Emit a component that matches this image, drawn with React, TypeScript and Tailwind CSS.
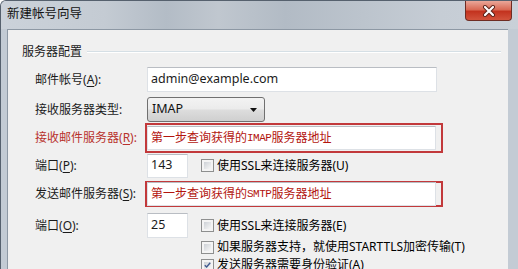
import React from 'react';

const inputCls =
    'h-[24px] bg-white border border-[#dde1e6] border-t-[#b9bdc3] px-[3px] flex items-center text-[12.5px] text-[#1b1b1b]';

const Check: React.FC<{ checked?: boolean }> = ({ checked }) => (
    <div className="w-[13px] h-[13px] shrink-0 border border-[#8e8f8f] bg-[#f4f4f4] p-[2px]">
        <div className="w-full h-full bg-[linear-gradient(135deg,#cdd1d6,#f7f7f7)] flex items-center justify-center">
            {checked && (
                <svg width="9" height="8" viewBox="0 0 9 8">
                    <path d="M1 4.2 L3.4 6.6 L8 1.2" stroke="#3f5a8f" strokeWidth="1.8" fill="none" />
                </svg>
            )}
        </div>
    </div>
);

const Label: React.FC<{ text: string; acc?: string; red?: boolean; w?: string }> = ({ text, acc, red, w }) => (
    <div className={`${w ?? 'w-[112px]'} shrink-0 ${red ? 'text-[#b8322d]' : 'text-[#1b1b1b]'}`}>
        {text}
        {acc && (
            <>
                (<span className="underline underline-offset-2">{acc}</span>)
            </>
        )}
        :
    </div>
);

const RedHint: React.FC<{ proto: string }> = ({ proto }) => (
    <div className="w-[298px] h-full border-2 border-[#c2393b] flex items-center">
        <div className={`${inputCls} w-[289px] text-[12px] text-[#b3150f]`}>
            第一步查询获得的
            <span className="font-['Liberation_Mono',monospace] text-[11px] tracking-[-0.5px]">{proto}</span>
            服务器地址
        </div>
    </div>
);

export default function App() {
    return (
        <div className="w-[518px] h-[269px] overflow-hidden flex flex-col border-l border-t border-[#56616e] rounded-tl-[6px] bg-[#c3cbd4] font-['Noto_Sans','Noto_Sans_CJK_SC',sans-serif] text-[12px] leading-none">
            {/* title bar */}
            <div className="h-[28px] shrink-0 flex items-start justify-between pl-[6px] bg-[linear-gradient(90deg,#cbd2da_0%,#c4cbd3_20%,#b3bcc6_32%,#c0c7cf_42%,#b2bbc5_55%,#bcc4cd_70%,#c6cdd5_85%,#c9d0d8_100%)]">
                <span className="mt-[7px] text-[12.5px] text-[#111]">新建帐号向导</span>
                <div className="mr-[6px] w-[47px] h-[20px] rounded-b-[4px] border border-t-0 border-[#6e2c23] bg-[linear-gradient(180deg,#eaa799_0%,#d96a55_45%,#c3331f_55%,#d2533c_100%)] flex items-center justify-center">
                    <svg width="14" height="12" viewBox="0 0 14 12">
                        <path d="M3 2 L11 10 M11 2 L3 10" stroke="#5a2219" strokeWidth="4" strokeLinecap="round" />
                        <path d="M3 2 L11 10 M11 2 L3 10" stroke="#ffffff" strokeWidth="2.2" strokeLinecap="round" />
                    </svg>
                </div>
            </div>

            {/* client area */}
            <div className="flex-1 min-h-0 ml-[6px] mr-[10px] bg-[#f0f0f0] border-l border-t border-[#8d98a4] pl-[14px] pr-[7px] pt-[15px]">
                <div className="h-[14px] flex items-center">
                    <span className="text-[#1b1b1b]">服务器配置</span>
                    <div className="flex-1 ml-[5px] border-t border-[#d5dfe5] border-b border-b-white" />
                </div>

                <div className="pl-[13px]">
                    <div className="mt-[8px] h-[25px] flex items-center">
                        <Label text="邮件帐号" acc="A" />
                        <div className={`${inputCls} w-[290px] h-[25px]`}>admin@example.com</div>
                    </div>

                    <div className="mt-[5px] h-[25px] flex items-center">
                        <Label text="接收服务器类型" />
                        <div className="w-[118px] h-[25px] rounded-[3px] border border-[#707070] bg-[linear-gradient(180deg,#f3f3f3_0%,#ebebeb_48%,#dddddd_52%,#cfcfcf_100%)] flex items-center justify-between pl-[4px] pr-[7px]">
                            <span className="text-[12.5px] text-[#111]">IMAP</span>
                            <svg width="7" height="4" viewBox="0 0 7 4">
                                <path d="M0 0 H7 L3.5 4 Z" fill="#111" />
                            </svg>
                        </div>
                    </div>

                    <div className="mt-[1px] h-[30px] flex items-center">
                        <Label text="接收邮件服务器" acc="R" red w="w-[110px]" />
                        <RedHint proto="IMAP" />
                    </div>

                    <div className="mt-[1px] h-[23px] flex items-center">
                        <Label text="端口" acc="P" />
                        <div className={`${inputCls} w-[41px] h-[23px]`}>143</div>
                        <div className="ml-[13px] flex items-center gap-[3px]">
                            <Check />
                            <span>使用SSL来连接服务器(U)</span>
                        </div>
                    </div>

                    <div className="mt-[4px] h-[26px] flex items-center">
                        <Label text="发送邮件服务器" acc="S" w="w-[110px]" />
                        <RedHint proto="SMTP" />
                    </div>

                    <div className="mt-[6px] h-[25px] flex items-center">
                        <Label text="端口" acc="O" />
                        <div className={`${inputCls} w-[41px] h-[25px]`}>25</div>
                        <div className="ml-[13px] flex items-center gap-[3px]">
                            <Check />
                            <span>使用SSL来连接服务器(E)</span>
                        </div>
                    </div>

                    <div className="h-[18px] flex items-center pl-[166px] gap-[3px]">
                        <Check />
                        <span>如果服务器支持，就使用STARTTLS加密传输(T)</span>
                    </div>

                    <div className="h-[18px] flex items-center pl-[166px] gap-[3px]">
                        <Check checked />
                        <span>发送服务器需要身份验证(A)</span>
                    </div>
                </div>
            </div>
        </div>
    );
}
